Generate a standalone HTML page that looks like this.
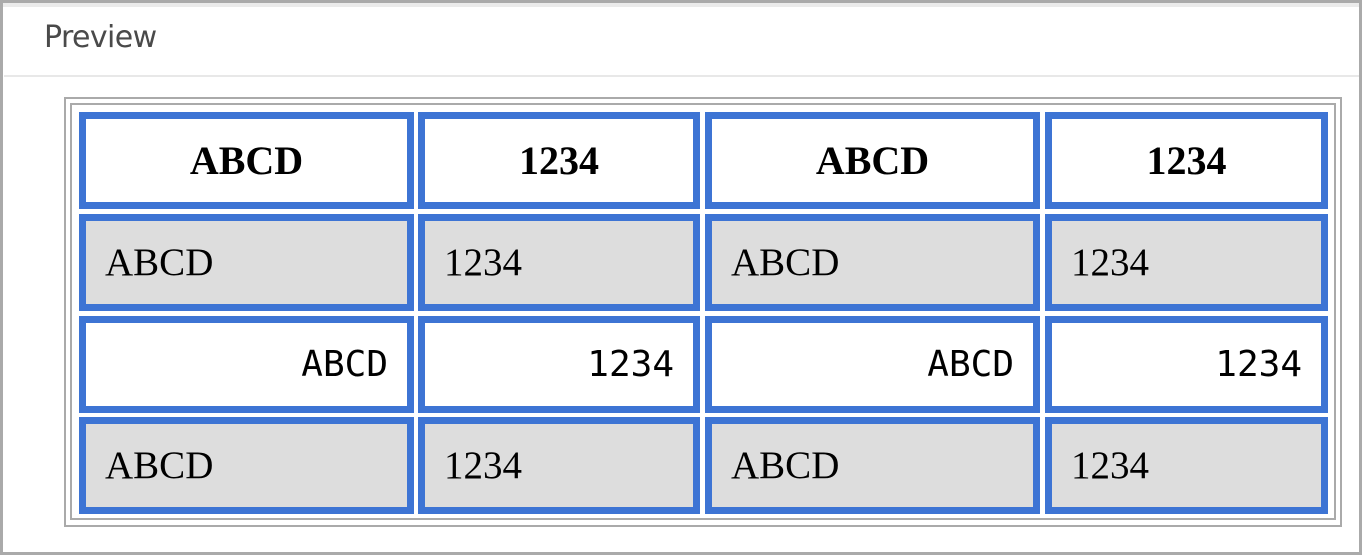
<!DOCTYPE html>
<html><head><meta charset="utf-8"><style>
html,body{margin:0;padding:0;}
body{width:1362px;height:555px;position:relative;overflow:hidden;background:#fff;}
.frame{position:absolute;left:0;top:0;width:1356px;height:549px;border:3px solid #aaa;}
.strip{position:absolute;left:3px;top:3px;width:1356px;height:4px;background:#ebebeb;}
.title{position:absolute;left:44px;top:20px;font-family:"DejaVu Sans","Liberation Sans",sans-serif;font-size:30px;line-height:36px;color:#4a4a4a;letter-spacing:-0.6px;}
.hr{position:absolute;left:4px;top:75px;width:1355px;height:2px;background:#e8e8e8;}
.o1{position:absolute;left:64px;top:97px;width:1274px;height:426px;border:2px solid #aaa;}
.o2{position:absolute;left:70px;top:103px;width:1262px;height:413px;border:2px solid #aaa;}
.c{position:absolute;box-sizing:border-box;border:7px solid #3d74d4;height:97px;display:flex;align-items:center;padding:0 19px;color:#000;}
.h{background:#fff;justify-content:center;font-family:"Liberation Serif",serif;font-weight:bold;font-size:40px;}
.g{background:#ddd;font-family:"Liberation Serif",serif;font-size:39px;}
.m{background:#fff;justify-content:flex-end;font-family:"DejaVu Sans Mono","Liberation Mono",monospace;font-size:36px;}
</style></head><body>
<div class="frame"></div>
<div class="strip"></div>
<div class="title">Preview</div>
<div class="hr"></div>
<div class="o1"></div>
<div class="o2"></div>

<div class="c h" style="left:79px;top:112px;width:335px">ABCD</div>
<div class="c h" style="left:418px;top:112px;width:282px">1234</div>
<div class="c h" style="left:705px;top:112px;width:335px">ABCD</div>
<div class="c h" style="left:1045px;top:112px;width:283px">1234</div>

<div class="c g" style="left:79px;top:214px;width:335px">ABCD</div>
<div class="c g" style="left:418px;top:214px;width:282px">1234</div>
<div class="c g" style="left:705px;top:214px;width:335px">ABCD</div>
<div class="c g" style="left:1045px;top:214px;width:283px">1234</div>

<div class="c m" style="left:79px;top:316px;width:335px">ABCD</div>
<div class="c m" style="left:418px;top:316px;width:282px">1234</div>
<div class="c m" style="left:705px;top:316px;width:335px">ABCD</div>
<div class="c m" style="left:1045px;top:316px;width:283px">1234</div>

<div class="c g" style="left:79px;top:417px;width:335px">ABCD</div>
<div class="c g" style="left:418px;top:417px;width:282px">1234</div>
<div class="c g" style="left:705px;top:417px;width:335px">ABCD</div>
<div class="c g" style="left:1045px;top:417px;width:283px">1234</div>
</body></html>
